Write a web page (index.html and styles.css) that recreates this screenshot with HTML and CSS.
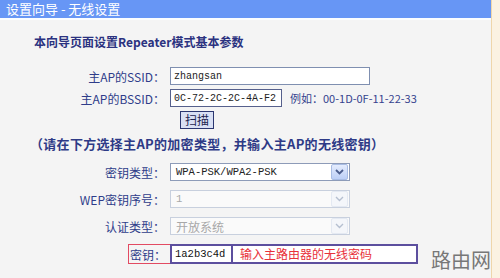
FILE: index.html
```html
<!DOCTYPE html>
<html lang="zh-CN">
<head>
  <meta charset="UTF-8" />
  <title>设置向导 - 无线设置</title>
  <link rel="stylesheet" href="styles.css">
</head>
<body>
  <div class="panel">
    <div class="titlebar">设置向导 - 无线设置</div>

    <div class="content">
      <h2 class="heading">本向导页面设置Repeater模式基本参数</h2>

      <div class="row">
        <label class="label">主AP的SSID：</label>
        <input class="field ssid" type="text" value="zhangsan">
      </div>
      <div class="row">
        <label class="label">主AP的BSSID：</label>
        <input class="field bssid" type="text" value="0C-72-2C-2C-4A-F2">
        <span class="example">例如：00-1D-0F-11-22-33</span>
      </div>
      <div class="row scan-row">
        <button class="scan">扫描</button>
      </div>

      <p class="note">（请在下方选择主AP的加密类型，并输入主AP的无线密钥）</p>

      <div class="row sel-row">
        <label class="label">密钥类型：</label>
        <div class="select">
          <span class="value">WPA-PSK/WPA2-PSK</span>
          <span class="arrow"><svg width="9" height="6" viewBox="0 0 9 6"><path d="M1 1l3.5 3.5L8 1" fill="none" stroke="currentColor" stroke-width="1.8"/></svg></span>
        </div>
      </div>
      <div class="row sel-row">
        <label class="label">WEP密钥序号：</label>
        <div class="select disabled">
          <span class="value">1</span>
          <span class="arrow"><svg width="9" height="6" viewBox="0 0 9 6"><path d="M1 1l3.5 3.5L8 1" fill="none" stroke="currentColor" stroke-width="1.4"/></svg></span>
        </div>
      </div>
      <div class="row sel-row">
        <label class="label">认证类型：</label>
        <div class="select disabled">
          <span class="value cn">开放系统</span>
          <span class="arrow"><svg width="9" height="6" viewBox="0 0 9 6"><path d="M1 1l3.5 3.5L8 1" fill="none" stroke="currentColor" stroke-width="1.4"/></svg></span>
        </div>
      </div>

      <div class="row key-row">
        <div class="mark">
          <label class="key-label">密钥：</label>
          <input class="field key" type="text" value="1a2b3c4d">
        </div>
        <div class="hint">输入主路由器的无线密码</div>
      </div>
    </div>

    <div class="watermark">路由网</div>
  </div>
</body>
</html>
```

FILE: styles.css
```css
body {
  margin: 0;
  background: #fbf2e2;
  font-family: "Noto Sans CJK SC", sans-serif;
  font-size: 12px;
  color: #2c3a84;
}

.panel {
  position: relative;
  width: 491px;
  height: 278px;
  background: #f4f4f4;
  border-right: 1px solid #efd6ab;
  overflow: hidden;
}

.titlebar {
  height: 18px;
  line-height: 18px;
  padding-left: 6px;
  background: #6796f5;
  color: #fff;
  font-size: 13px;
  border-bottom: 2px solid #fbfdff;
}

.heading {
  margin: 14px 0 0 34px;
  font-size: 12px;
  line-height: 16px;
  font-weight: bold;
  color: #2b3280;
}

.row {
  display: flex;
  align-items: center;
  height: 18px;
  margin-bottom: 4px;
}

.heading + .row {
  margin-top: 17px;
}

.label {
  width: 165px;
  text-align: right;
  flex-shrink: 0;
  color: #2f3d8a;
}

.field {
  box-sizing: border-box;
  height: 18px;
  margin: 0 0 0 5px;
  padding: 0 3px;
  border: 1px solid #7f8fb0;
  background: #fff;
  font-family: "Liberation Mono", monospace;
  font-size: 10px;
  color: #222;
  outline: none;
}

.ssid {
  width: 200px;
}

.bssid {
  width: 112px;
  border-color: #56608c;
}

.example {
  margin-left: 8px;
  font-size: 11px;
  color: #34428e;
}

.scan-row {
  padding-left: 180px;
}

.scan {
  width: 34px;
  height: 18px;
  padding: 0;
  border: 1px solid #2b3670;
  background: #d9e0f4;
  font-family: "Noto Sans CJK SC", sans-serif;
  font-size: 12px;
  line-height: 16px;
  color: #1e2450;
}

.note {
  margin: 7px 0 0 30px;
  font-size: 13px;
  line-height: 16px;
  font-weight: bold;
  letter-spacing: 0.3px;
  color: #2e3a86;
}

.sel-row {
  margin-bottom: 9px;
}

.note + .sel-row {
  margin-top: 11px;
}

.select {
  box-sizing: border-box;
  display: flex;
  align-items: center;
  justify-content: space-between;
  width: 180px;
  height: 18px;
  margin-left: 5px;
  padding: 0 1px 0 5px;
  border: 1px solid #8d9bb8;
  background: #fff;
  font-family: "Liberation Mono", monospace;
  font-size: 10.5px;
  color: #222;
}

.select .arrow {
  display: flex;
  align-items: center;
  justify-content: center;
  width: 15px;
  height: 14px;
  border: 1px solid #a9bde4;
  border-radius: 2px;
  background: linear-gradient(#e4ecfd, #bccff6);
  color: #4b5d8d;
}

.select.disabled {
  border-color: #c8d0de;
  background: #fafafa;
  color: #a8a8a8;
}

.select.disabled .arrow {
  border-color: #e4e9f2;
  background: #f4f6fa;
  color: #b5bfd0;
}

.select .cn {
  font-family: "Noto Sans CJK SC", sans-serif;
  font-size: 12px;
}

.key-row {
  height: 20px;
  margin-top: 5px;
}

.mark {
  display: flex;
  align-items: center;
  height: 20px;
  margin-left: 128px;
  border: 1px solid #e24a62;
  box-sizing: border-box;
}

.key-label {
  width: 37px;
  text-align: right;
  color: #2f3d8a;
}

.key {
  width: 63px;
  height: 20px;
  margin: -1px -1px -1px 4px;
  border: 2px solid #5c4f9e;
  font-size: 10.5px;
  color: #111;
}

.hint {
  box-sizing: border-box;
  width: 185px;
  height: 20px;
  line-height: 16px;
  padding-left: 7px;
  border: 2px solid #5c4f9e;
  border-left: none;
  background: #fff;
  color: #e8303a;
}

.watermark {
  position: absolute;
  right: 0;
  bottom: 5px;
  font-size: 20px;
  line-height: 26px;
  color: #777;
}
```
